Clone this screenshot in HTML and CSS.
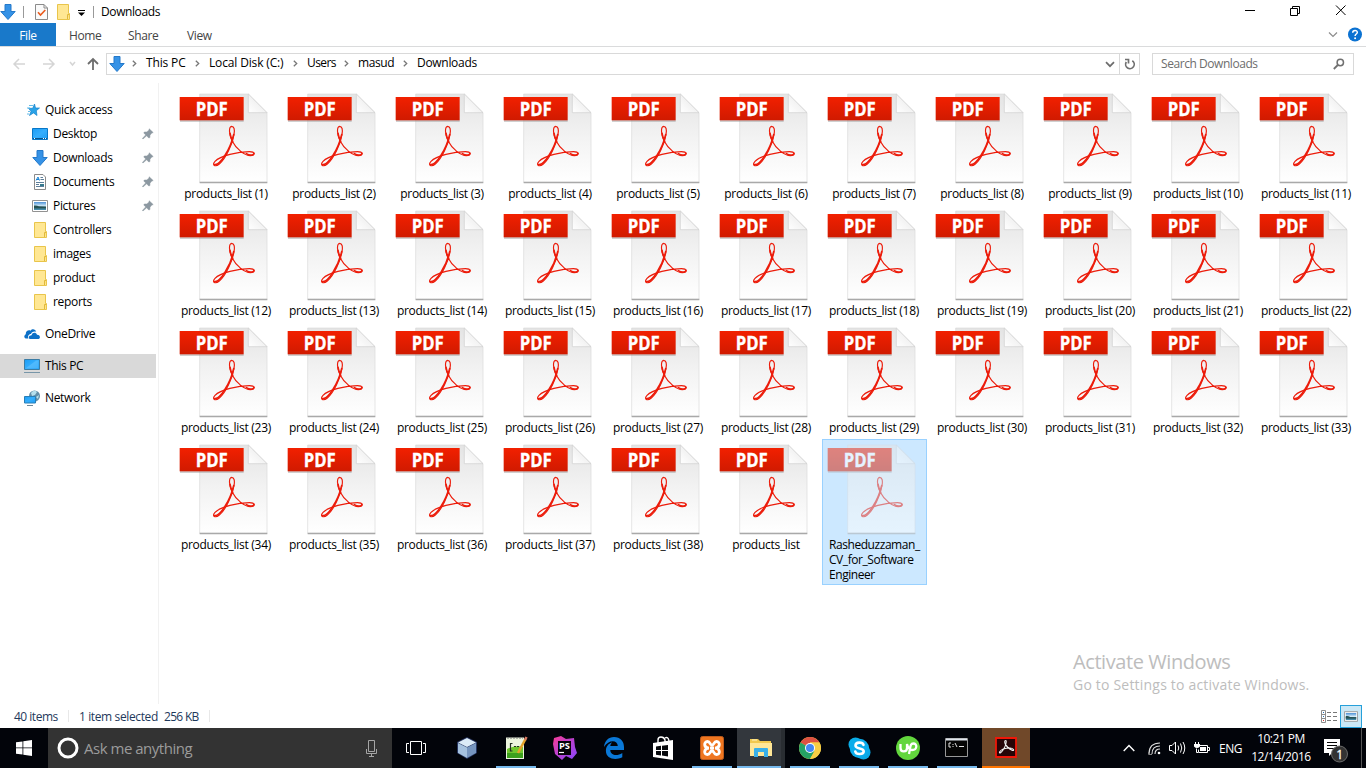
FILE: index.html
```html
<!DOCTYPE html>
<html lang="en">
<head>
<meta charset="utf-8">
<title>Downloads</title>
<link rel="stylesheet" href="styles.css">
</head>
<body>
<svg class="defs" width="0" height="0">
  <defs>
    <linearGradient id="paper" x1="0" y1="0" x2="0" y2="1"><stop offset="0" stop-color="#e4e4e4"/><stop offset=".5" stop-color="#f3f3f3"/><stop offset="1" stop-color="#fff"/></linearGradient>
    <linearGradient id="band" x1="0" y1="0" x2="0" y2="1"><stop offset="0" stop-color="#f22000"/><stop offset="1" stop-color="#d01a00"/></linearGradient>
    <linearGradient id="foldg" x1="0" y1="1" x2="1" y2="0"><stop offset="0" stop-color="#fff"/><stop offset=".5" stop-color="#f2f2f2"/><stop offset="1" stop-color="#d8d8d8"/></linearGradient>
    <linearGradient id="screen" x1="0" y1="0" x2="1" y2="1"><stop offset="0" stop-color="#1a9cf5"/><stop offset=".5" stop-color="#35aefd"/><stop offset="1" stop-color="#1c9df4"/></linearGradient>
    <linearGradient id="sky" x1="0" y1="0" x2="0" y2="1"><stop offset="0" stop-color="#4a90d6"/><stop offset=".5" stop-color="#d4ebf7"/><stop offset=".6" stop-color="#31606b"/><stop offset="1" stop-color="#4a93b5"/></linearGradient>
    <linearGradient id="psg" x1="0" y1="0" x2="1" y2="1"><stop offset="0" stop-color="#fb3c94"/><stop offset=".4" stop-color="#c340c7"/><stop offset="1" stop-color="#8745ff"/></linearGradient>
  </defs>
  <symbol id="down" viewBox="0 0 16 16"><path d="M5 .5H11V7.5H15.2L8 15.5L.8 7.5H5Z" fill="#3592e6" stroke="#2479ca"/></symbol>
  <symbol id="folder" viewBox="0 0 14 16"><path d="M.5 .5H11.5V9.5H12.5V15.5H.5Z" fill="#ffe793" stroke="#e9c54b"/><path d="M10.500 15V10.5H12.500" fill="#ffe07a" stroke="#e0b93c"/></symbol>
  <symbol id="pin" viewBox="0 0 12 12"><path d="M7.2 .8L11.2 4.6L9.8 5L8 7.2L7.9 9.6L6.8 10L4.6 7.8L1 11L.4 10.5L3.7 6.9L1.8 5L2.3 4L4.800 3.900L6.900 2.200Z" fill="#8c98a1" stroke="#8c98a1" stroke-width=".5"/></symbol>
  <symbol id="chev" viewBox="0 0 5 7"><path d="M.8 .8L3.7 3.5L.8 6.2" fill="none" stroke="#777" stroke-width="1.3"/></symbol>
  <symbol id="picture" viewBox="0 0 16 12"><path d="M.5 .5H15.5V11.5H.5Z" fill="#fff" stroke="#929292"/><path d="M2 2H14V10H2Z" fill="url(#sky)"/><path d="M2 5.5Q5 5 7 6.5L14 7V8.2H2Z" fill="#245152"/></symbol>
</svg>

<header class="titlebar">
  <svg class="i16 app-icon"><use href="#down"/></svg>
  <i class="vbar first"></i>
  <svg class="doc-check" width="13" height="16" viewBox="0 0 13 16"><path d="M.5 .5H9L12.5 4V15.5H.5Z" fill="#fafafa" stroke="#8b8b8b"/><path d="M9 .5V4H12.5" fill="none" stroke="#8b8b8b"/><path d="M3 8.2L5.5 11L10.3 6" fill="none" stroke="#ea5a1c" stroke-width="1.6"/></svg>
  <svg class="folder quick-folder"><use href="#folder"/></svg>
  <svg class="customize" width="7" height="6" viewBox="0 0 7 6"><path d="M0 .5H7" stroke="#000"/><path d="M0 2.5H7L3.5 6Z"/></svg>
  <i class="vbar second"></i>
  <span class="window-title">Downloads</span>
  <svg class="window-buttons" width="104" height="14" viewBox="0 0 104 14" fill="none" stroke="#000"><path d="M0 7.5H10M45.500 5.500H52.500V12.500H45.500ZM47.500 5V3.500H54.500V10.500H53M91 2.500L100.500 12M100.500 2.500L91 12"/></svg>
</header>
<nav class="ribbon">
  <span class="tab file">File</span><span class="tab home">Home</span><span class="tab share">Share</span><span class="tab view">View</span>
  <svg class="ribbon-tools" width="36" height="16" viewBox="0 0 36 16"><path d="M2 5.500L6 9.500L10 5.500" fill="none" stroke="#8c8c8c" stroke-width="1.200"/><circle cx="28" cy="7.500" r="7" fill="#0b72d2"/><path d="M25.700 5.800C25.700 2.700 30.500 2.900 30.300 5.500C30.200 7.100 28.100 7 28.100 8.900" fill="none" stroke="#fff" stroke-width="1.500"/><circle cx="28.100" cy="11.200" r="1" fill="#fff"/></svg>
</nav>
<section class="address-row">
  <svg class="nav-arrows" width="94" height="14" viewBox="0 0 94 14" fill="none"><g stroke="#d5d5d5" stroke-width="1.500"><path d="M7 2L2 7L7 12M2 7H13M37 2L42 7L37 12M31 7H42M58 5L60.500 8L63 5"/></g><path d="M76 7L81 2L86 7M81 2V13" stroke="#6d6d6d" stroke-width="1.800"/></svg>
  <div class="address">
    <svg class="i16"><use href="#down"/></svg>
    <svg class="sep s0"><use href="#chev"/></svg><span class="c1">This PC</span>
    <svg class="sep"><use href="#chev"/></svg><span class="c2">Local Disk (C:)</span>
    <svg class="sep"><use href="#chev"/></svg><span class="c3">Users</span>
    <svg class="sep"><use href="#chev"/></svg><span class="c4">masud</span>
    <svg class="sep"><use href="#chev"/></svg><span class="c5">Downloads</span>
    <svg class="drop" width="10" height="7" viewBox="0 0 10 7"><path d="M1 1.200L5 5.200L9 1.200" fill="none" stroke="#6d6d6d" stroke-width="1.700"/></svg>
    <div class="refresh"><svg width="11" height="12" viewBox="0 0 11 12" fill="none" stroke="#707070" stroke-width="1.700"><path d="M8.300 2.700A4.300 4.300 0 1 1 2.300 4M1 1.500H4.500V5.500"/></svg></div>
  </div>
  <div class="search"><span>Search Downloads</span><svg width="12" height="12" viewBox="0 0 12 12" fill="none" stroke="#707070"><circle cx="7.300" cy="4.500" r="3.200" stroke-width="1.500"/><path d="M4.800 7L.8 11" stroke-width="1.800"/></svg></div>
</section>
<main class="body">
  <aside class="sidebar">
    <div class="row top"><svg width="16" height="16" viewBox="0 0 16 16"><path d="M9.500 2L10.500 6H14.500L11.300 8.700L12 13.500L8.500 10.900L4.500 13.500L6 9.300L3.500 6.300H7.700Z" fill="#2aa3e8" stroke="#1682cb" stroke-width=".7"/><path d="M4 3.500H8M2 6H5M3 9.500H5M2 12H4" stroke="#65bce9"/></svg><span>Quick access</span></div>
    <div class="row"><svg width="16" height="16" viewBox="0 0 16 16"><path d="M.5 2.500H15.500V13.500H.5Z" fill="url(#screen)" stroke="#0877c7"/><path d="M1 12.500H15" stroke="#07548c"/><path d="M2 12.500H3M11 12.500H12M13 12.500H14" stroke="#fff"/></svg><span>Desktop</span><svg class="pin"><use href="#pin"/></svg></div>
    <div class="row"><svg class="i16"><use href="#down"/></svg><span>Downloads</span><svg class="pin"><use href="#pin"/></svg></div>
    <div class="row"><svg width="16" height="16" viewBox="0 0 16 16"><path d="M2.500 .5H11L13.500 3V15.500H2.500Z" fill="#fff" stroke="#8a8a8a"/><path d="M4 6.500L6 3L7.500 6.500M4.500 5.500H7" stroke="#1883d4" fill="none"/><path d="M8.500 3.500H11M8.500 5.500H12M4 8.500H12M4 10.500H7M4 12.500H12" stroke="#5d7e99"/><path d="M8 10H12V12H8Z" fill="#357a8d"/></svg><span>Documents</span><svg class="pin"><use href="#pin"/></svg></div>
    <div class="row"><svg width="16" height="12"><use href="#picture"/></svg><span>Pictures</span><svg class="pin"><use href="#pin"/></svg></div>
    <div class="row f"><svg class="folder"><use href="#folder"/></svg><span>Controllers</span></div>
    <div class="row f"><svg class="folder"><use href="#folder"/></svg><span>images</span></div>
    <div class="row f"><svg class="folder"><use href="#folder"/></svg><span>product</span></div>
    <div class="row f"><svg class="folder"><use href="#folder"/></svg><span>reports</span></div>
    <div class="row root"><svg width="16" height="16" viewBox="0 0 16 16"><path d="M2.500 12.500C0 12.500-.5 9.500 1.800 8.200C1.500 5.200 4.500 3.500 6.600 4.700C8 2.500 11.500 3 12.200 5.800C9 5 7.500 6.500 7 8C4.500 8 3.500 10.500 4.500 12.500Z" fill="#0c70c7"/><path d="M6 13C4.200 12.500 4.400 9.300 7.500 9.300C8.200 6.200 12 6 13 8.700C16.200 8.500 17 12.300 14.500 13Z" fill="#0c70c7"/></svg><span>OneDrive</span></div>
    <div class="row root selected"><svg width="16" height="16" viewBox="0 0 16 16"><path d="M.5 1.500H15.500V11.500H.5Z" fill="url(#screen)" stroke="#3b7ca5"/><path d="M1.500 10.500L12 2.500H14.500V10.500Z" fill="#69c6ff" opacity=".5"/><path d="M0 14.500H16" stroke="#7896a8"/></svg><span>This PC</span></div>
    <div class="row root"><svg width="16" height="16" viewBox="0 0 16 16"><circle cx="10.500" cy="6" r="5.500" fill="#618da7"/><path d="M7 3Q10-1 13 2L11 5L8 6ZM12 7L15 5L14 9Z" fill="#b5dfed"/><path d="M.5 6.500H11.500V13H.5Z" fill="url(#screen)" stroke="#287eb6"/><path d="M3 15.500H9" stroke="#6d8797"/></svg><span>Network</span></div>
  </aside>
  <section class="files" id="files"></section>
  <div class="watermark"><div class="wm-title">Activate Windows</div><div class="wm-text">Go to Settings to activate Windows.</div></div>
</main>
<footer class="status">
  <span class="st1">40 items</span><i></i><span class="st2">1 item selected</span><span class="st3">256 KB</span><i class="last"></i>
  <svg class="list-view" width="16" height="13" viewBox="0 0 16 13" fill="none"><path d="M.5 .5H4.500V12.500H.5ZM.5 4.500H4.500M.5 8.500H4.500" stroke="#8c8c8c"/><path d="M6 2.500H10M12 2.500H16M6 6.500H10M12 6.500H16M6 10.500H10M12 10.500H16" stroke="#777"/><path d="M2 2.500H3M2 6.500H3" stroke="#2870b0"/><path d="M2 10.500H3" stroke="#c33"/></svg>
  <div class="icon-view"><svg width="14" height="11"><use href="#picture"/></svg></div>
</footer>
<footer class="taskbar">
  <div class="start"><svg width="16" height="16" viewBox="0 0 16 16"><path d="M0 2.300L6.500 1.400V7.500H0ZM7.300 1.300L16 0V7.500H7.300ZM0 8.300H6.500V14.600L0 13.700ZM7.300 8.300H16V16L7.300 14.700Z" fill="#fff"/></svg></div>
  <div class="cortana"><svg width="22" height="22" viewBox="0 0 22 22"><circle cx="11" cy="11" r="9" fill="none" stroke="#fff" stroke-width="3"/></svg><span>Ask me anything</span><svg class="mic" width="11" height="17" viewBox="0 0 11 17" fill="none" stroke="#a5a5a5"><path d="M2.500 .5H8.500V11.500H2.500ZM.5 9V13.500H10.500V9M5.500 13.500V16M3 16.500H8"/></svg></div>
  <div class="tasks">
    <div class="task tv"><svg width="20" height="14" viewBox="0 0 20 14" fill="none" stroke="#fff"><path d="M4.500 .5H15.500V13.500H4.500ZM3 2.500H.5V11.500H3M17 2.500H19.500V11.500H17"/></svg></div>
    <div class="task"><svg width="24" height="24" viewBox="0 0 24 24"><path d="M12 1L22 6V17L12 23L2 17V6Z" fill="#26355f"/><path d="M12 2L21 6.500L12 11L3 6.500Z" fill="#dcebf7"/><path d="M3 7L12 11.500V22L3 17Z" fill="#a6c2df"/><path d="M21 7L12 11.500V22L21 17Z" fill="#7695be"/></svg></div>
    <div class="task open"><svg width="24" height="24" viewBox="0 0 24 24"><path d="M2 1.500H20V23H2Z" fill="#edf5df"/><path d="M3 13Q12 9 19 11V22H3Z" fill="#70c72d"/><path d="M3 17H19V22H3Z" fill="#3da01d"/><path d="M3 2H19" stroke="#777" stroke-dasharray="2 1"/><path d="M8.500 15H6.500V7.500H8.500M10 10.500H12M13 10.500H15" stroke="#243024" stroke-width="1.200" fill="none"/><path d="M21.500 3L14 17" stroke="#e5a329" stroke-width="2.500"/><path d="M22.500 1L21 4" stroke="#d67964" stroke-width="2.500"/></svg></div>
    <div class="task"><svg width="24" height="24" viewBox="0 0 24 24"><path d="M1 2L8 0L13 3L21 2L22 11L24 17L19 23L13 20L9 24L2 18L0 8Z" fill="url(#psg)"/><path d="M5 5H18V19H5Z" fill="#050309"/><text class="ps-word" x="6" y="13" textLength="11" lengthAdjust="spacingAndGlyphs">PS</text><path d="M6 16.500H11" stroke="#fff" stroke-width="1.200"/></svg></div>
    <div class="task"><svg width="22" height="22" viewBox="0 0 22 22"><path d="M1 10C1.500 4 5.500 0 11 0C17.500 0 21 4.500 21 10V13H7.300C7.500 18.500 14 19.500 19.300 16V20.300C12 24 2.900 21.500 2.900 14C2.900 10 5 6.800 9.100 5.300C8 6.500 7.500 7.700 7.300 9H14.800C14.500 2.500 5.500 2.500 1 10Z" fill="#0a78d7"/></svg></div>
    <div class="task"><svg width="22" height="24" viewBox="0 0 22 24"><path d="M1 7L21 4V24L1 21Z" fill="#fff"/><path d="M6 7V4Q6 1 9 1T13 4V6M13 2Q16 0 17 5" fill="none" stroke="#fff" stroke-width="1.400"/><path d="M4 10.500L9 9.800V14H4ZM10 9.700L16 9V14H10ZM4 15H9V19.500L4 18.700ZM10 15H16V20.500L10 19.600Z" fill="#05070b"/></svg></div>
    <div class="task open"><svg width="24" height="24" viewBox="0 0 24 24"><rect x=".5" y=".5" width="23" height="23" rx="2" fill="#ef7620" stroke="#bd5a1b"/><path d="M10 12H14M9 12.200C3.500 12 3.500 5.500 7.500 5.500C10.500 5.500 9.500 9 12 9S13.500 5.500 16.500 5.500C20.500 5.500 20.500 12 15 12.200C20.500 12.500 20.500 18.500 16.500 18.500C13.500 18.500 14.500 15 12 15S10.500 18.500 7.500 18.500C3.500 18.500 3.500 12.500 9 12.200" fill="none" stroke="#fff" stroke-width="2.800"/></svg></div>
    <div class="task open explorer"><svg width="22" height="20" viewBox="0 0 22 20"><path d="M0 1H8L10 3H21V18H0Z" fill="#f2c94f"/><path d="M0 5H22V18H0Z" fill="#ffe697"/><path d="M2 2H7" stroke="#fff4c5"/><path d="M4 19V11Q4 10 5 10H17Q18 10 18 11V19H14V14H8V19Z" fill="#39afe8"/></svg></div>
    <div class="task open"><svg width="22" height="22" viewBox="0 0 22 22"><circle cx="11" cy="11" r="11" fill="#f7ce45"/><path d="M11 11L1.500 5.500A11 11 0 0 1 20.500 5.500H11Z" fill="#de5142"/><path d="M1.500 5.500A11 11 0 0 0 11 22L15.500 14L11 11Z" fill="#25a265"/><path d="M20.500 5.500H11L15.800 13.700L11 22A11 11 0 0 0 20.500 5.500Z" fill="#f7ce45"/><circle cx="11" cy="11" r="5" fill="#fff"/><circle cx="11" cy="11" r="4" fill="#4387f4"/></svg></div>
    <div class="task open"><svg width="23" height="23" viewBox="0 0 23 23"><circle cx="7.500" cy="7.500" r="7" fill="#0aaee9"/><circle cx="15.500" cy="15.500" r="7" fill="#0aa8e5"/><circle cx="11.500" cy="11.500" r="9.700" fill="#0baceb"/><path d="M15.500 7.800C14.500 4.800 7.500 4.800 7.500 8.600C7.500 12.600 15.700 10.500 15.700 14.300C15.700 18 8 17.900 7.300 14.500" fill="none" stroke="#fff" stroke-width="2.600" stroke-linecap="round"/></svg></div>
    <div class="task open"><svg width="24" height="24" viewBox="0 0 24 24"><circle cx="12" cy="12" r="12" fill="#62d63d"/><path d="M4.500 8V12C4.500 16.500 11 16.500 11 12V8C12 12 13 14 16 14C21.500 14 21.500 7.500 17.300 7.500C14 7.500 14.500 11 13 18" fill="none" stroke="#fff" stroke-width="2.300"/></svg></div>
    <div class="task open cmd"><svg width="23" height="19" viewBox="0 0 23 19"><path d="M.5 .5H22.500V18.500H.5Z" fill="#050505" stroke="#989898"/><path d="M1 1.500H22" stroke="#dfe5ed" stroke-width="2"/><path d="M6 5H4V9H6M8 6V7M8 8V9M10 5L12 9M14 8.500H19" fill="none" stroke="#e2e2e2"/></svg></div>
    <div class="task open acrobat"><svg width="22" height="21" viewBox="0 0 22 21"><path d="M1 1H21V20H1Z" fill="#260407" stroke="#ef1708" stroke-width="1.800"/><path d="M10.500 3.500C8.500 4 10 10 17.500 13.500C20 14 18 11 15 11C11 11 6 12.500 4.500 15C4 17.500 7 15 9 11.500C11 8 12 3 10.500 3.500Z" fill="none" stroke="#eee" stroke-width="1.100"/></svg></div>
  </div>
  <div class="tray">
    <svg class="up" width="12" height="8" viewBox="0 0 12 8"><path d="M.7 7L6 1.500L11.300 7" fill="none" stroke="#fff" stroke-width="1.400"/></svg>
    <svg class="wifi" width="13" height="13" viewBox="0 0 13 13" fill="none" stroke="#ddd"><path d="M1 12Q1 1 12 1M4 12Q4 4 12 4M7 12Q7 7 12 7" stroke-width="1.100"/><path d="M.6 10V12.500H4" stroke="#888"/><circle cx="11" cy="11" r="1.300" fill="#fff" stroke="none"/></svg>
    <svg class="sound" width="17" height="14" viewBox="0 0 17 14" fill="none" stroke="#fff"><path d="M.5 4.500H3L6.500 1V13L3 9.500H.5ZM9 4.500Q10.500 7 9 9.500M11.500 2.500Q14 7 11.500 11.500M14 1Q17.500 7 14 13"/></svg>
    <svg class="battery" width="16" height="12" viewBox="0 0 16 12"><path d="M5.500 3.500H13.500V10.500H4.500V7.500M14 5.500H15.500V8.500H14M1.500 0V2.500M4.500 0V2.500M2.500 6.500V10.500H4" fill="none" stroke="#fff"/><path d="M0 2H6V4.500Q3 7.500 0 4.500ZM6 5H12V9H6Z" fill="#fff"/></svg>
    <span class="lang">ENG</span>
    <div class="clock"><span class="time">10:21 PM</span><span class="date">12/14/2016</span></div>
    <svg class="notify" width="27" height="26" viewBox="0 0 27 26"><path d="M0 1H16V15H8L5 18V15H0Z" fill="#fff"/><path d="M3 4.500H13M3 7.500H13M3 10.500H11" stroke="#070707"/><circle cx="15.500" cy="16" r="8" fill="#333" stroke="#6b6b6b"/><text class="badge-number" x="15.500" y="20.500" text-anchor="middle">1</text></svg>
    <i class="peek"></i>
  </div>
</footer>
<script src="app.js"></script>
</body>
</html>
```

FILE: app.js
```js
const files = document.getElementById('files');
const names = [];
for (let n = 1; n <= 38; n++) names.push(`products_list (${n})`);
names.push('products_list');

const pdfIcon = `
<svg class="pdf-icon" viewBox="24 24 276 276">
  <path d="M89 295V30H235L291 86V295Z" fill="url(#paper)" stroke="#d9d9d9" stroke-width="2"/>
  <path d="M89 295.500H292" stroke="#a9a9a9" stroke-width="4"/>
  <path d="M235 30V86H291Z" fill="url(#foldg)" stroke="#cfcfcf" stroke-width="2"/>
  <path d="M30 111H221" stroke="#999" stroke-width="4" opacity=".6"/>
  <rect x="29" y="39" width="192" height="70" fill="url(#band)"/>
  <text x="77" y="95" class="pdf-word" textLength="96" lengthAdjust="spacingAndGlyphs">PDF</text>
  <g fill="none" stroke="#ec1c0b" stroke-linecap="round" stroke-linejoin="round">
    <path d="M185 127C176 128 176 151 187 172C198 195 225 215 241 215C257 215 256 203 238 203C204 203 151 215 135 232C124 244 136 250 148 240C168 224 187 180 192 152C195 136 192 127 185 127Z" stroke-width="3.500"/>
    <path d="M134 242C150 244 181 197 191 152" stroke-width="5"/>
    <path d="M229 209C240 216 251 214 252 208" stroke-width="5"/>
    <path d="M180 148C181 154 184 164 188 172" stroke-width="5"/>
  </g>
</svg>`;

function addTile(label, extraClass) {
  const tile = document.createElement('div');
  tile.className = 'tile ' + extraClass;
  tile.innerHTML = `${pdfIcon}<div class="label">${label}</div>`;
  files.appendChild(tile);
}

names.forEach(name => addTile(name, ''));
addTile('Rasheduzzaman_<br>CV_for_Software<br>Engineer', 'chosen');
```

FILE: styles.css
```css
* { box-sizing: border-box; }
body { margin: 0; width: 1366px; height: 768px; overflow: hidden; background: #fff; color: #000; font: 12px/15px "Open Sans", "Noto Sans", sans-serif; letter-spacing: -.28px; display: flex; flex-direction: column; }
svg { display: block; flex: none; overflow: visible; }
span { white-space: nowrap; }
.defs { position: absolute; }
.i16 { width: 16px; height: 16px; }
.folder { width: 14px; height: 16px; }

.titlebar { height: 23px; display: flex; align-items: center; letter-spacing: -.4px; }
.vbar { width: 1px; height: 12px; background: #999; }
.vbar.first { margin-left: 7px; }
.doc-check { margin-left: 11px; }
.quick-folder { margin-left: 9px; }
.customize { margin: 3px 0 0 7px; }
.vbar.second { margin-left: 8px; }
.window-title { margin-left: 7px; }
.window-buttons { margin-left: auto; margin-right: 17px; margin-bottom: 3px; }

.ribbon { height: 24px; display: flex; align-items: center; border-bottom: 1px solid #dadbdc; color: #444; letter-spacing: -.4px; }
.tab { line-height: 16px; padding-top: 2px; }
.tab.file { width: 56px; height: 23px; line-height: 22px; text-align: center; color: #fff; background: #1979ca; }
.tab.home { margin-left: 13px; width: 59px; }
.tab.share { width: 59px; }
.ribbon-tools { margin-left: auto; margin-right: 3px; }

.address-row { height: 36px; padding: 6px 12px 0 0; display: flex; align-items: flex-start; }
.nav-arrows { margin: 4px 0 0 12px; }
.address { width: 1034px; height: 22px; border: 1px solid #d9d9d9; display: flex; align-items: center; padding-left: 2px; letter-spacing: -.3px; }
.address span { line-height: 18px; padding-bottom: 2px; }
.sep { width: 5px; height: 7px; margin-bottom: 1px; }
.s0 { margin-left: 7px; }
.c1 { margin-left: 9px; width: 49px; letter-spacing: -.15px; }
.c2 { margin-left: 9px; width: 84px; letter-spacing: -.15px; }
.c3 { margin-left: 9px; width: 37px; letter-spacing: -.6px; }
.c4 { margin-left: 9px; width: 45px; letter-spacing: -.4px; }
.c5 { margin-left: 9px; }
.drop { margin-left: auto; margin-right: 4px; }
.refresh { width: 20px; height: 20px; border-left: 1px solid #d9d9d9; display: flex; align-items: center; justify-content: center; }
.search { margin-left: 12px; width: 202px; height: 22px; border: 1px solid #d9d9d9; display: flex; align-items: center; justify-content: space-between; padding: 0 8px; color: #6d6d6d; letter-spacing: -.44px; }
.search span { padding-bottom: 1px; }

.body { height: 621px; display: flex; position: relative; }
.sidebar { width: 159px; border-right: 1px solid #f1f1f1; padding-top: 15px; }
.row { height: 24px; width: 156px; padding-left: 32px; display: flex; align-items: center; gap: 5px; letter-spacing: -.33px; }
.row.top { padding-left: 25px; gap: 4px; }
.row.f { padding-left: 34px; }
.row.root { padding-left: 24px; margin-top: 8px; }
.row.selected { background: #d9d9d9; }
.row span { padding-bottom: 1px; }
.pin { width: 12px; height: 12px; margin-left: auto; margin-right: 2px; }

.files { display: grid; grid-template-columns: repeat(11, 105px); grid-auto-rows: 117px; column-gap: 3px; padding: 5px 0 0 15px; align-items: start; align-content: start; }
.tile { width: 105px; border: 1px solid transparent; padding-top: 3px; }
.pdf-icon { width: 92px; height: 92px; margin-left: 3px; }
.pdf-word { font: 700 56px "Open Sans", sans-serif; fill: #fff; stroke: #fff; stroke-width: 1px; letter-spacing: 0; }
.label { text-align: center; margin: 2px -2px 0 -3px; height: 15px; white-space: nowrap; }
.chosen { background: #cce8ff; border-color: #99d1ff; height: 146px; }
.chosen .pdf-icon { opacity: .5; }
.chosen .label { text-align: left; margin: 2px 0 0 6px; height: 45px; letter-spacing: -.44px; }

.watermark { position: absolute; left: 1073px; top: 566px; color: #bdbdbd; }
.wm-title { font-size: 20px; line-height: 25px; letter-spacing: -.42px; }
.wm-text { font-size: 14px; line-height: 20px; letter-spacing: .2px; padding-top: 1px; }

.status { height: 24px; display: flex; align-items: center; padding-left: 14px; color: #1e395b; letter-spacing: -.5px; }
.status i { width: 1px; height: 12px; background: #e8e8e8; }
.st1 { width: 54px; }
.st2 { margin-left: 10px; width: 85px; letter-spacing: -.38px; }
.st3 { width: 45px; letter-spacing: -.7px; }
.list-view { margin-left: auto; }
.icon-view { width: 22px; height: 23px; margin: 0 4px 0 3px; background: #cbe8f6; border: 1px solid #26a0da; display: flex; align-items: center; justify-content: center; }

.taskbar { height: 40px; background: #02040a; display: flex; color: #fff; }
.start { width: 48px; display: flex; align-items: center; justify-content: center; }
.cortana { width: 344px; background: #333; display: flex; align-items: center; padding-left: 9px; color: #9b9b9b; font-size: 15px; letter-spacing: -.48px; }
.cortana span { margin-left: 5px; }
.mic { margin-left: auto; margin-right: 15px; }
.tasks { display: flex; gap: 1px; }
.task { width: 48px; height: 40px; display: flex; align-items: center; justify-content: center; background: linear-gradient(#76b9ed, #76b9ed) bottom center / 0 2px no-repeat; }
.task.tv { margin-right: 2px; }
.task.open { background-size: 40px 2px; }
.task.explorer { background-color: #33373d; background-size: 48px 2px; box-shadow: inset -4px 0 #292d32; }
.task.cmd { padding: 0 2px 1px 0; }
.task.acrobat { background: #704829; border-bottom: 2px solid #ff7500; padding: 0 1px 0 0; }
.ps-word { font: 700 8.500px "Open Sans", sans-serif; fill: #fff; letter-spacing: 0; }
.tray { flex: 1; display: flex; align-items: center; }
.up { margin-left: 93px; }
.wifi { margin-left: 13px; }
.sound { margin-left: 8px; }
.battery { margin-left: 8px; }
.lang { margin-left: 9px; width: 25px; letter-spacing: -.5px; }
.clock { width: 60px; margin-left: 7px; display: flex; flex-direction: column; align-items: center; line-height: 18px; letter-spacing: -.5px; }
.date { letter-spacing: -.4px; }
.notify { margin: 5px 0 0 13px; }
.badge-number { font: 12px "Open Sans", sans-serif; fill: #fff; stroke: #fff; stroke-width: .3px; }
.peek { width: 1px; height: 40px; background: #555; margin-left: auto; margin-right: 4px; }
```
